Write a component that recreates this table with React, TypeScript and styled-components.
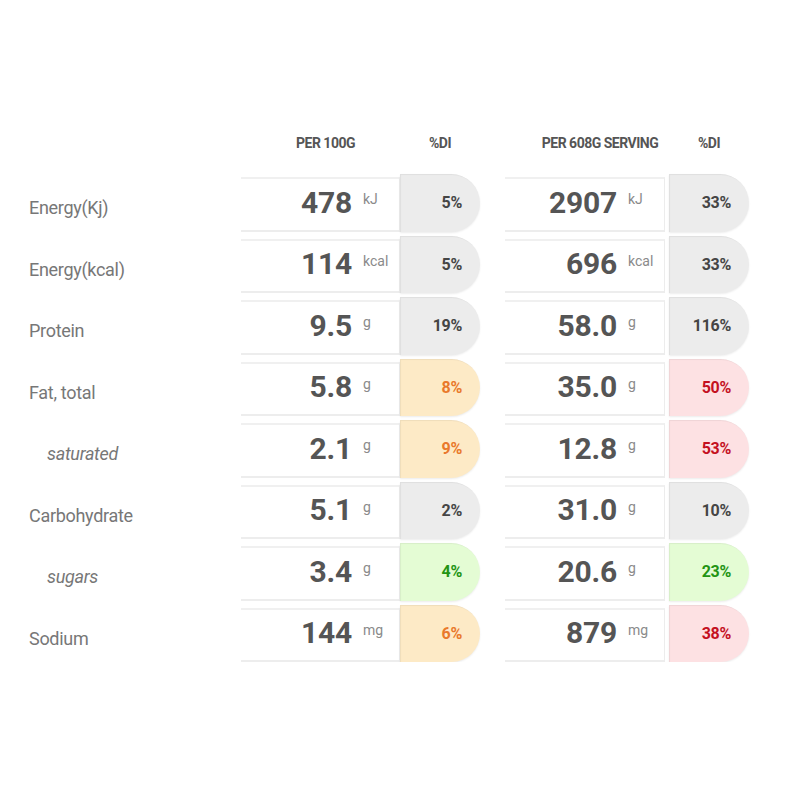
import React from "react";
import styled, { createGlobalStyle } from "styled-components";

const Global = createGlobalStyle`
  html, body { margin: 0; padding: 0; background: #fff; }
  body { font-family: Roboto, "Liberation Sans", sans-serif; }
`;

type Tone = "grey" | "orange" | "green" | "red";

const toneBg: Record<Tone, string> = {
  grey: "#ececec",
  orange: "#fdeac6",
  green: "#e4fcd4",
  red: "#fde1e3",
};
const toneFg: Record<Tone, string> = {
  grey: "#454545",
  orange: "#e9792b",
  green: "#239414",
  red: "#c4111f",
};

const Table = styled.div`
  padding: 133px 0 0 29px;
  display: flex;
  flex-direction: column;
  gap: 4px;
`;

const Row = styled.div`
  display: grid;
  grid-template-columns: 187px 239px 244px;
  column-gap: 25px;
  height: 57.5px;
`;

const HeaderRow = styled(Row)`
  height: 20px;
  margin-bottom: 17px;
  align-items: center;
`;

const HeaderGroup = styled.div`
  display: flex;
`;

const HeaderCell = styled.div<{ $w: number; $shift?: number }>`
  width: ${(p) => p.$w}px;
  padding-left: ${(p) => p.$shift ?? 0}px;
  box-sizing: border-box;
  text-align: center;
  font-size: 14px;
  font-weight: 700;
  letter-spacing: -0.5px;
  color: #555;
`;

const Label = styled.div<{ $sub?: boolean }>`
  display: flex;
  align-items: center;
  padding-top: 10px;
  padding-left: ${(p) => (p.$sub ? 18 : 0)}px;
  font-size: 18px;
  font-style: ${(p) => (p.$sub ? "italic" : "normal")};
  color: #777;
  letter-spacing: -0.3px;
`;

const Group = styled.div<{ $gap: number }>`
  display: flex;
  gap: ${(p) => p.$gap}px;
`;

const ValueCell = styled.div`
  flex: 1;
  margin-top: 3px;
  padding-bottom: 4px;
  display: flex;
  align-items: center;
  justify-content: flex-end;
  background: #fff;
  border-top: 2px solid #f0f0f0;
  border-bottom: 2px solid #ededed;
  border-right: 1px solid #ececec;
  box-sizing: border-box;
`;

const Num = styled.span`
  font-size: 30px;
  font-weight: 700;
  color: #555;
  letter-spacing: -0.2px;
`;

const Unit = styled.span`
  width: 36px;
  margin-left: 11px;
  padding-bottom: 6px;
  font-size: 14px;
  color: #8a8a8a;
`;

const Pill = styled.div<{ $tone: Tone }>`
  width: 80px;
  box-sizing: border-box;
  display: flex;
  align-items: center;
  justify-content: flex-end;
  padding-right: 18px;
  background: ${(p) => toneBg[p.$tone]};
  color: ${(p) => toneFg[p.$tone]};
  border-radius: 0 29px 29px 0;
  box-shadow: inset 1px 1px 1px rgba(0, 0, 0, 0.06), 0 1px 2px rgba(0, 0, 0, 0.08);
  font-size: 16px;
  font-weight: 700;
  letter-spacing: -0.3px;
`;

type Item = {
  label: string;
  sub?: boolean;
  a: string;
  unit: string;
  ap: string;
  at: Tone;
  b: string;
  bp: string;
  bt: Tone;
};

const rows: Item[] = [
  { label: "Energy(Kj)", a: "478", unit: "kJ", ap: "5%", at: "grey", b: "2907", bp: "33%", bt: "grey" },
  { label: "Energy(kcal)", a: "114", unit: "kcal", ap: "5%", at: "grey", b: "696", bp: "33%", bt: "grey" },
  { label: "Protein", a: "9.5", unit: "g", ap: "19%", at: "grey", b: "58.0", bp: "116%", bt: "grey" },
  { label: "Fat, total", a: "5.8", unit: "g", ap: "8%", at: "orange", b: "35.0", bp: "50%", bt: "red" },
  { label: "saturated", sub: true, a: "2.1", unit: "g", ap: "9%", at: "orange", b: "12.8", bp: "53%", bt: "red" },
  { label: "Carbohydrate", a: "5.1", unit: "g", ap: "2%", at: "grey", b: "31.0", bp: "10%", bt: "grey" },
  { label: "sugars", sub: true, a: "3.4", unit: "g", ap: "4%", at: "green", b: "20.6", bp: "23%", bt: "green" },
  { label: "Sodium", a: "144", unit: "mg", ap: "6%", at: "orange", b: "879", bp: "38%", bt: "red" },
];

export default function App() {
  return (
    <>
      <Global />
      <Table>
        <HeaderRow>
          <div />
          <HeaderGroup>
            <HeaderCell $w={159} $shift={10}>PER 100G</HeaderCell>
            <HeaderCell $w={80}>%DI</HeaderCell>
          </HeaderGroup>
          <HeaderGroup>
            <HeaderCell $w={164} $shift={26}>PER 608G SERVING</HeaderCell>
            <HeaderCell $w={80}>%DI</HeaderCell>
          </HeaderGroup>
        </HeaderRow>
        {rows.map((r) => (
          <Row key={r.label}>
            <Label $sub={r.sub}>{r.label}</Label>
            <Group $gap={0}>
              <ValueCell>
                <Num>{r.a}</Num>
                <Unit>{r.unit}</Unit>
              </ValueCell>
              <Pill $tone={r.at}>{r.ap}</Pill>
            </Group>
            <Group $gap={4}>
              <ValueCell>
                <Num>{r.b}</Num>
                <Unit>{r.unit}</Unit>
              </ValueCell>
              <Pill $tone={r.bt}>{r.bp}</Pill>
            </Group>
          </Row>
        ))}
      </Table>
    </>
  );
}
